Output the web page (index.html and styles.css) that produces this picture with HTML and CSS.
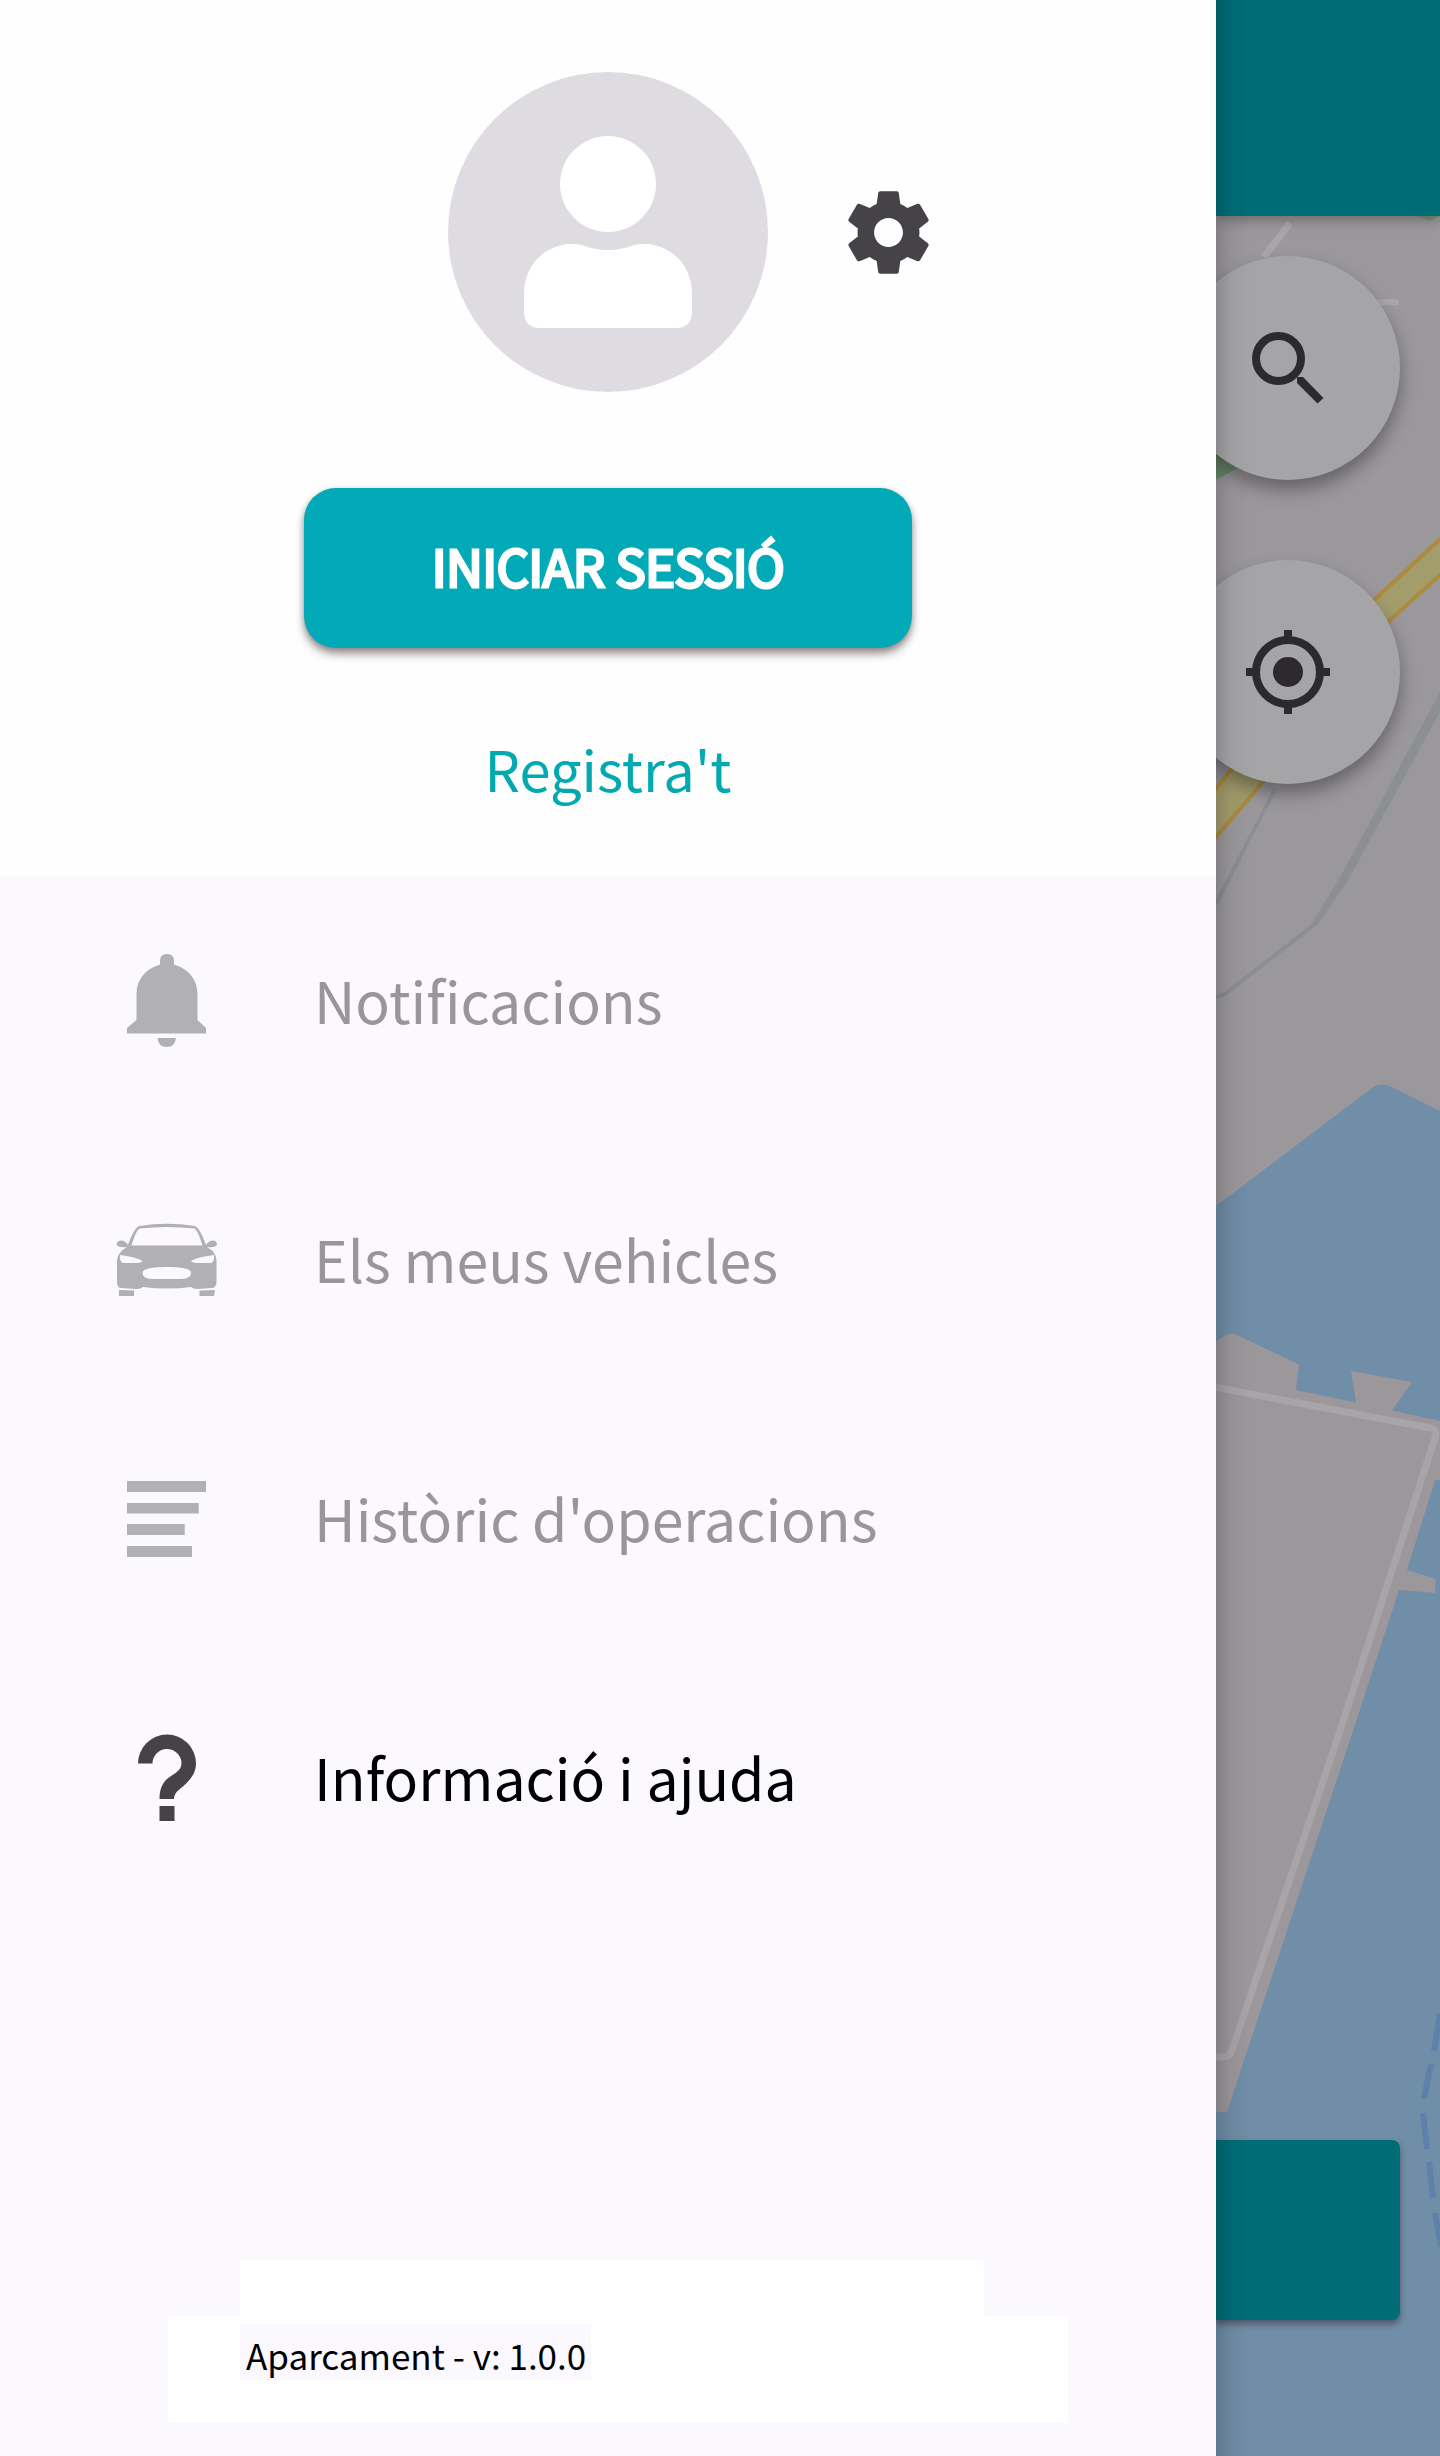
FILE: index.html
```html
<!DOCTYPE html>
<html lang="ca">
<head>
<meta charset="utf-8">
<title>Aparcament</title>
<link rel="stylesheet" href="styles.css">
</head>
<body>
<div class="screen">
  <aside class="drawer">
    <header class="profile">
      <div class="profile-row">
        <svg class="avatar" viewBox="0 0 320 320" aria-hidden="true">
          <circle cx="160" cy="160" r="160" fill="#dedce0"/>
          <rect x="112" y="64" width="96" height="96" rx="48" fill="#fff"/>
          <path d="M120 172C127 172 130 172 134 173Q160 183 186 173C190 172 193 172 200 172C227 175 244 196 244 222V239Q244 256 228 256H92Q76 256 76 239V222C76 196 93 175 120 172Z" fill="#fff"/>
        </svg>
        <svg class="gear" viewBox="0 0 24 24" aria-hidden="true"><path fill="#454347" d="M19.43 12.98c.04-.32.07-.64.07-.98s-.03-.66-.07-.98l2.11-1.65c.19-.15.24-.42.12-.64l-2-3.46c-.12-.22-.39-.3-.61-.22l-2.49 1c-.52-.4-1.08-.73-1.69-.98l-.38-2.65C14.46 2.18 14.25 2 14 2h-4c-.25 0-.46.18-.49.42l-.38 2.65c-.61.25-1.17.59-1.69.98l-2.49-1c-.23-.09-.49 0-.61.22l-2 3.46c-.13.22-.07.49.12.64l2.11 1.65c-.04.32-.07.65-.07.98s.03.66.07.98l-2.11 1.65c-.19.15-.24.42-.12.64l2 3.46c.12.22.39.3.61.22l2.49-1c.52.4 1.08.73 1.69.98l.38 2.65c.03.24.24.42.49.42h4c.25 0 .46-.18.49-.42l.38-2.65c.61-.25 1.17-.59 1.69-.98l2.49 1c.23.09.49 0 .61-.22l2-3.46c.12-.22.07-.49-.12-.64l-2.11-1.65zM12 15.5c-1.93 0-3.5-1.57-3.5-3.5s1.57-3.5 3.5-3.5 3.5 1.57 3.5 3.5-1.57 3.5-3.5 3.5z"/></svg>
      </div>
      <button class="login"><span>INICIAR SESSIÓ</span></button>
      <a class="register">Registra't</a>
    </header>
    <nav class="menu">
      <div class="item disabled">
        <svg viewBox="103 936 128 128" aria-hidden="true"><path fill="#b1b0b3" d="M160 964.500V961Q160 954 167 954T174 961V964.500C189 969 197.500 980 197.500 994V1020L206 1028V1033.500H127V1028L136.500 1020V994C136.500 980 145 969 160 964.500ZM157.500 1038H176Q175 1047 166.700 1047T157.500 1038Z"/></svg>
        <span>Notificacions</span>
      </div>
      <div class="item disabled">
        <svg viewBox="103 1195 128 128" aria-hidden="true"><path fill="#b1b0b3" fill-rule="evenodd" d="M128 1245C131 1237 134 1229 139 1226Q167 1221.500 195 1226C200 1229 203 1237 206 1245C209 1239 217 1239 217 1244.500Q216 1248 207 1247Q216 1252 216.500 1260V1280Q217 1286 213 1288L197 1289Q193 1289 191 1287Q167 1290 143 1287Q141 1289 137 1289L120 1288Q116.500 1286 117 1280V1260Q118 1252 127 1247Q118 1248 116.500 1244.500C117 1239 125 1239 128 1245ZM131.500 1245.500H202.500C200 1238 198 1231 194.500 1228.500Q167 1225.500 139.500 1228.500C136 1231 134 1238 131.500 1245.500ZM120 1255Q119.500 1262 123 1263H136Q141 1263 142.500 1261Q137 1257 120 1255ZM214 1255Q214.500 1262 211 1263H198Q193 1263 191 1261Q197 1257 214 1255ZM142.500 1273Q142.500 1267 167 1267T191 1273Q191 1279 180 1279H153.500Q142.500 1279 142.500 1273ZM119 1290L134 1290.500V1296H119ZM215 1290L199.500 1290.500V1296H214Z"/></svg>
        <span>Els meus vehicles</span>
      </div>
      <div class="item disabled">
        <svg viewBox="103 1454 128 128" aria-hidden="true"><path fill="#b1b0b3" d="M127 1481H206V1492H127ZM127 1503H198.700V1513.500H127ZM127 1524H184.700V1535H127ZM127 1546H192V1557H127Z"/></svg>
        <span>Històric d'operacions</span>
      </div>
      <div class="item">
        <svg viewBox="103 1713 128 128" aria-hidden="true"><path fill="#454347" d="M138 1763.500A29 29 0 0 1 196 1763.500C196 1774 189 1781 183 1786.500C177 1791 174 1794 174 1799H159.500C159.500 1788 163 1783 167 1779C173 1774 181.500 1771 181.500 1763.500A14.500 14.500 0 0 0 152.500 1763.500ZM159.500 1806H174.500V1821H159.500Z"/></svg>
        <span>Informació i ajuda</span>
      </div>
    </nav>
    <footer class="about">
      <div class="about-top"></div>
      <div class="about-main"><span class="version">Aparcament - v: 1.0.0</span></div>
    </footer>
  </aside>
  <main class="backdrop">
    <div class="appbar"></div>
    <svg class="map" viewBox="1216 216 224 2240" aria-hidden="true">
      <rect x="1216" y="216" width="224" height="2240" fill="#9b989c"/>
      <path d="M1264 257L1290 223" fill="none" stroke="#a8a6a9" stroke-width="7"/>
      <path d="M1370 304Q1385 301 1396 302.500" fill="none" stroke="#a8a6a9" stroke-width="6" stroke-linecap="round"/>
      <path d="M1416 216H1440L1430 221Z" fill="#819477"/>
      <path d="M1216 440L1240 467L1216 480Z" fill="#709172"/>
      <path d="M1216 904L1275 789" fill="none" stroke="#8c8f92" stroke-width="4"/>
      <path d="M1216 997L1225 994L1314 925" fill="none" stroke="#8b8e92" stroke-width="4" stroke-linejoin="round"/>
      <path d="M1311 925L1343 872L1440 692V712L1347 882L1316 927Z" fill="#8b8f92"/>
      <path d="M1210 795L1373 601L1450 530V566L1390 620L1263 782L1210 844Z" fill="#a39d6c" stroke="#ac8b3d" stroke-width="4"/>
      <path d="M1216 1206L1372 1088Q1379 1082 1390 1086L1440 1111V2456H1216Z" fill="#708ea8"/>
      <path d="M1216 1341L1224 1336Q1231 1332 1237 1335L1299 1364.500L1296 1390L1356 1402.500L1351 1371L1412 1382L1392 1410.500L1440 1421V1480H1435L1407 1570L1436 1579L1435 1593L1399 1590L1350 1740L1227 2112H1216Z" fill="#9b979b"/>
      <path d="M1214 1387L1430 1428Q1438 1430 1435 1438L1337 1740L1232 2050Q1230 2057 1224 2057H1214" fill="none" stroke="#a7a5a8" stroke-width="7"/>
      <path d="M1440 2014L1434 2051M1431 2064L1424 2099M1423 2113L1427 2149M1429 2162L1433 2198M1435 2213L1441 2246" fill="none" stroke="#5f80a8" stroke-width="6"/>
    </svg>
    <div class="fab search"><svg viewBox="-48 -48 96 96" aria-hidden="true"><circle cx="-9.500" cy="-9.500" r="22.500" fill="none" stroke="#2d2a2e" stroke-width="8"/><path d="M9 9L15 9L35.500 30L29.500 35.500L9 15Z" fill="#2d2a2e"/></svg></div>
    <div class="fab locate"><svg viewBox="-48 -48 96 96" aria-hidden="true"><circle r="32" fill="none" stroke="#2d2a2e" stroke-width="8"/><circle r="15" fill="#2d2a2e"/><path d="M0-42V-34M0 34V42M-42 0H-34M34 0H42" stroke="#2d2a2e" stroke-width="8"/></svg></div>
    <div class="action"></div>
    <div class="edge"></div>
  </main>
</div>
</body>
</html>
```
FILE: styles.css
```css
body {
  margin: 0;
  font-family: "Noto Sans CJK SC", "Noto Sans", sans-serif;
}
.screen {
  display: flex;
  width: 1440px;
  height: 2456px;
  overflow: hidden;
}
.drawer {
  width: 1216px;
  display: flex;
  flex-direction: column;
  background: #fbf9fd;
}
.profile {
  height: 876px;
  box-sizing: border-box;
  padding-top: 72px;
  background: #fefefe;
  display: flex;
  flex-direction: column;
  align-items: center;
}
.profile-row {
  align-self: stretch;
  display: flex;
  align-items: center;
  padding-left: 448px;
  gap: 71px;
}
.avatar { width: 320px; height: 320px; }
.gear { width: 99px; height: 99px; }
.login {
  width: 608px;
  height: 160px;
  margin-top: 96px;
  padding: 0 0 7px;
  border: 0;
  border-radius: 32px;
  background: #02a9b6;
  box-shadow: 0 6px 8px rgba(50, 35, 35, .48), 0 1px 5px rgba(0, 0, 0, .15);
  color: #fff;
  font: 400 51px/152px "Noto Sans CJK SC", sans-serif;
  letter-spacing: -.7px;
  -webkit-text-stroke: 3px #fff;
}
.register {
  margin-top: 79px;
  color: #02a9b0;
  font-size: 56px;
  line-height: 82px;
}
.menu {
  display: flex;
  flex-direction: column;
  gap: 131px;
  padding: 60px 0 0 103px;
}
.item {
  height: 128px;
  display: flex;
  align-items: center;
  gap: 83px;
  font-size: 57.2px;
  line-height: 84px;
  color: #000;
  white-space: nowrap;
}
.item span { padding-bottom: 2px; }
.item svg { width: 128px; height: 128px; }
.disabled { color: #98969a; }
.about {
  margin: auto 0 33px 168px;
  width: 900px;
}
.about-top {
  width: 744px;
  height: 56px;
  margin-left: 72px;
  background: #fff;
}
.about-main {
  height: 107px;
  box-sizing: border-box;
  padding: 8px 0 0 72px;
  background: #fff;
}
.version {
  display: block;
  width: 345px;
  height: 56px;
  padding-left: 6px;
  background: #fbf9fd;
  font-size: 35px;
  line-height: 62px;
  white-space: nowrap;
}
.backdrop {
  position: relative;
  flex: 1;
  overflow: hidden;
}
.appbar {
  position: relative;
  z-index: 1;
  height: 216px;
  background: #006d76;
  box-shadow: 0 4px 12px rgba(0, 0, 0, .3);
}
.map {
  display: block;
  width: 224px;
  height: 2240px;
}
.fab {
  position: absolute;
  left: -40px;
  width: 224px;
  height: 224px;
  border-radius: 50%;
  background: #a5a4a6;
  box-shadow: 0 10px 18px rgba(0, 0, 0, .35);
  display: grid;
  place-items: center;
}
.fab svg { width: 96px; height: 96px; }
.search { top: 256px; }
.locate { top: 560px; }
.action {
  position: absolute;
  top: 2140px;
  left: 0;
  width: 184px;
  height: 180px;
  border-radius: 0 8px 8px 0;
  background: #006d76;
  box-shadow: 0 4px 6px rgba(50, 35, 45, .5);
}
.edge {
  position: absolute;
  z-index: 2;
  inset: 0 auto 0 0;
  width: 36px;
  background: linear-gradient(90deg, rgba(0, 0, 0, .16), rgba(0, 0, 0, .05) 40%, transparent);
}
```
